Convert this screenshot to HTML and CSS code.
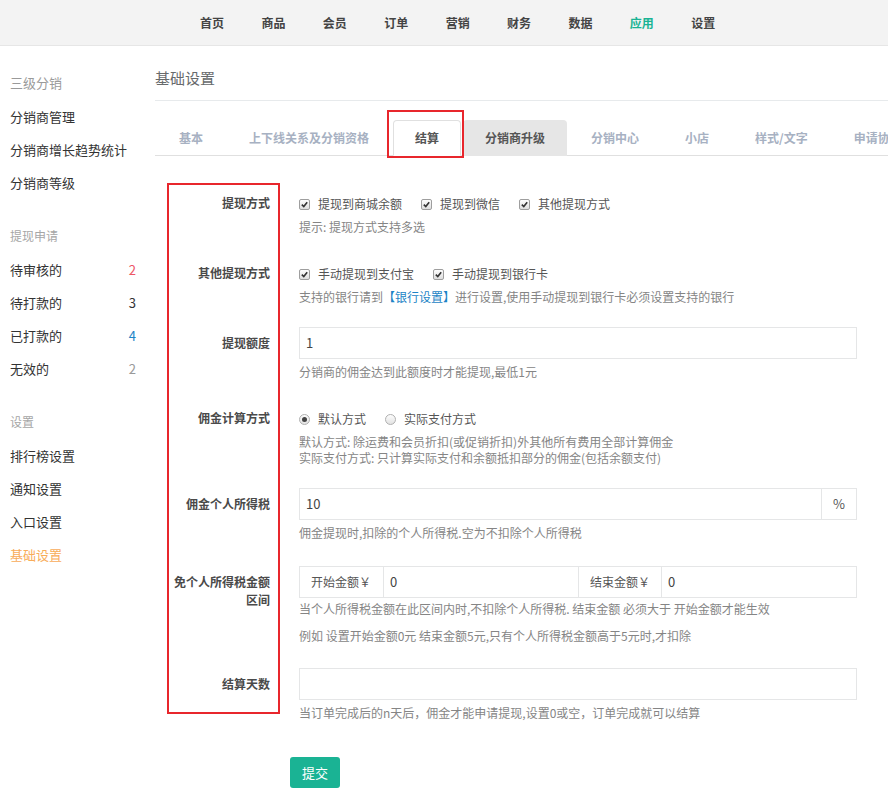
FILE: index.html
```html
<!DOCTYPE html>
<html lang="zh-CN">
<head>
<meta charset="utf-8">
<title>基础设置</title>
<link rel="stylesheet" href="styles.css">
</head>
<body>
<header class="topbar">
  <nav class="topnav">
    <a>首页</a><a>商品</a><a>会员</a><a>订单</a><a>营销</a><a>财务</a><a>数据</a><a class="on">应用</a><a>设置</a>
  </nav>
</header>
<div class="layout">
  <aside class="sidebar">
    <div class="side-group">
      <div class="side-head big">三级分销</div>
      <div class="side-item">分销商管理</div>
      <div class="side-item">分销商增长趋势统计</div>
      <div class="side-item">分销商等级</div>
    </div>
    <div class="side-group">
      <div class="side-head">提现申请</div>
      <div class="side-item"><span>待审核的</span><span class="num red">2</span></div>
      <div class="side-item"><span>待打款的</span><span class="num">3</span></div>
      <div class="side-item"><span>已打款的</span><span class="num blue">4</span></div>
      <div class="side-item"><span>无效的</span><span class="num gray">2</span></div>
    </div>
    <div class="side-group">
      <div class="side-head">设置</div>
      <div class="side-item">排行榜设置</div>
      <div class="side-item">通知设置</div>
      <div class="side-item">入口设置</div>
      <div class="side-item active">基础设置</div>
    </div>
  </aside>
  <main class="main">
    <h1 class="page-title">基础设置</h1>
    <ul class="tabs">
      <li><a>基本</a></li>
      <li><a>上下线关系及分销资格</a></li>
      <li class="active"><a>结算</a></li>
      <li class="hover"><a>分销商升级</a></li>
      <li><a>分销中心</a></li>
      <li><a>小店</a></li>
      <li><a>样式/文字</a></li>
      <li><a>申请协议</a></li>
    </ul>
    <form class="form">
      <div class="row">
        <label class="lbl">提现方式</label>
        <div class="ctl">
          <div class="checks">
            <span class="opt"><span class="cb"><svg viewBox="0 0 10 10"><path d="M2 5.2 L4.2 7.3 L8 2.6" /></svg></span>提现到商城余额</span>
            <span class="opt"><span class="cb"><svg viewBox="0 0 10 10"><path d="M2 5.2 L4.2 7.3 L8 2.6" /></svg></span>提现到微信</span>
            <span class="opt"><span class="cb"><svg viewBox="0 0 10 10"><path d="M2 5.2 L4.2 7.3 L8 2.6" /></svg></span>其他提现方式</span>
          </div>
          <p class="hint">提示: 提现方式支持多选</p>
        </div>
      </div>
      <div class="row">
        <label class="lbl">其他提现方式</label>
        <div class="ctl">
          <div class="checks">
            <span class="opt"><span class="cb"><svg viewBox="0 0 10 10"><path d="M2 5.2 L4.2 7.3 L8 2.6" /></svg></span>手动提现到支付宝</span>
            <span class="opt"><span class="cb"><svg viewBox="0 0 10 10"><path d="M2 5.2 L4.2 7.3 L8 2.6" /></svg></span>手动提现到银行卡</span>
          </div>
          <p class="hint">支持的银行请到<a class="link">【银行设置】</a>进行设置,使用手动提现到银行卡必须设置支持的银行</p>
        </div>
      </div>
      <div class="row">
        <label class="lbl">提现额度</label>
        <div class="ctl">
          <div class="input">1</div>
          <p class="hint">分销商的佣金达到此额度时才能提现,最低1元</p>
        </div>
      </div>
      <div class="row">
        <label class="lbl">佣金计算方式</label>
        <div class="ctl">
          <div class="checks">
            <span class="opt"><span class="rb on"></span>默认方式</span>
            <span class="opt"><span class="rb"></span>实际支付方式</span>
          </div>
          <p class="hint">默认方式: 除运费和会员折扣(或促销折扣)外其他所有费用全部计算佣金<br>实际支付方式: 只计算实际支付和余额抵扣部分的佣金(包括余额支付)</p>
        </div>
      </div>
      <div class="row row-wide">
        <label class="lbl">佣金个人所得税</label>
        <div class="ctl">
          <div class="group">
            <div class="input grow">10</div>
            <div class="addon pct">%</div>
          </div>
          <p class="hint">佣金提现时,扣除的个人所得税.空为不扣除个人所得税</p>
        </div>
      </div>
      <div class="row row-mid">
        <label class="lbl">免个人所得税金额区间</label>
        <div class="ctl">
          <div class="group">
            <div class="addon first">开始金额￥</div>
            <div class="input grow">0</div>
            <div class="addon">结束金额￥</div>
            <div class="input grow">0</div>
          </div>
          <p class="hint tight">当个人所得税金额在此区间内时,不扣除个人所得税. 结束金额 必须大于 开始金额才能生效</p>
          <p class="hint loose">例如 设置开始金额0元 结束金额5元,只有个人所得税金额高于5元时,才扣除</p>
        </div>
      </div>
      <div class="row">
        <label class="lbl">结算天数</label>
        <div class="ctl">
          <div class="input"></div>
          <p class="hint">当订单完成后的n天后，佣金才能申请提现,设置0或空，订单完成就可以结算</p>
        </div>
      </div>
      <div class="actions">
        <button type="button" class="btn">提交</button>
      </div>
    </form>
  </main>
</div>
<div class="mark mark-tab"></div>
<div class="mark mark-form"></div>
</body>
</html>
```

FILE: styles.css
```css
* { box-sizing: border-box; }
html, body { margin: 0; padding: 0; }
body {
  font-family: "Noto Sans CJK SC", "Liberation Sans", sans-serif;
  font-size: 12px;
  color: #333;
  background: #fff;
  width: 888px;
  overflow: hidden;
  position: relative;
}
a { text-decoration: none; }

/* top bar */
.topbar {
  height: 46px;
  background: #f3f3f3;
  border-bottom: 1px solid #e6e6e6;
}
.topnav {
  display: flex;
  gap: 37.4px;
  padding-left: 200px;
  line-height: 45px;
  font-weight: bold;
  font-size: 12px;
}
.topnav a { color: #444; }
.topnav a.on { color: #1ab394; }

.layout { display: flex; align-items: flex-start; }

/* sidebar */
.sidebar { width: 155px; flex: none; padding-top: 20px; }
.side-group { margin-bottom: 20px; }
.side-head {
  height: 33px;
  line-height: 33px;
  padding-left: 10px;
  margin-bottom: 1px;
  color: #a6a6a6;
  font-size: 12px;
}
.side-head.big { font-size: 13px; color: #9a9a9a; }
.side-item {
  height: 33px;
  line-height: 33px;
  padding: 0 19px 0 10px;
  font-size: 13px;
  color: #333;
  display: flex;
  justify-content: space-between;
}
.side-item.active { color: #f8ac59; }
.num { font-size: 13px; color: #333; }
.num.red { color: #ed5565; }
.num.blue { color: #1c84c6; }
.num.gray { color: #999; }

/* main */
.main { flex: 1; min-width: 0; }
.page-title {
  margin: 0;
  padding: 22px 0 12px;
  font-size: 15px;
  line-height: 20px;
  font-weight: normal;
  color: #676a6c;
  border-bottom: 1px solid #e7eaec;
}
.tabs {
  list-style: none;
  margin: 19px 0 0;
  padding: 0 0 0 2px;
  display: flex;
  white-space: nowrap;
  border-bottom: 1px solid #e0e0e0;
}
.tabs li { margin-right: 2px; margin-bottom: -1px; flex: none; }
.tabs a {
  display: block;
  padding: 10px 21px;
  line-height: 14px;
  border: 1px solid transparent;
  border-radius: 4px 4px 0 0;
  font-weight: bold;
  color: #a7b1c2;
}
.tabs li.active a {
  background: #fff;
  color: #555;
  border-color: #e0e0e0 #e0e0e0 #fff;
}
.tabs li.hover a { background: #e6e6e6; color: #555; }

/* form */
.form { padding: 31px 31px 0 0; }
.row {
  display: grid;
  grid-template-columns: 115px 558px;
  column-gap: 29px;
  margin-bottom: 22px;
}
.row-wide { margin-bottom: 25px; }
.row-mid { margin-bottom: 24px; }
.lbl {
  padding: 7px 0 0 10px;
  line-height: 18px;
  text-align: right;
  font-weight: bold;
  color: #4a4a4a;
}
.checks {
  display: flex;
  gap: 19px;
  padding-top: 7px;
  line-height: 20px;
  color: #555;
}
.opt { display: flex; align-items: center; }
.cb {
  width: 11px; height: 11px;
  border: 1px solid #9e9e9e;
  border-radius: 2px;
  background: linear-gradient(#fdfdfd, #dedede);
  margin-right: 8px;
  display: flex;
}
.cb svg { width: 9px; height: 9px; }
.cb path { fill: none; stroke: #333; stroke-width: 1.8; }
.rb {
  width: 11px; height: 11px;
  border: 1px solid #b0b0b0;
  border-radius: 50%;
  background: linear-gradient(#fdfdfd, #e2e2e2);
  margin-right: 8px;
  position: relative;
}
.rb.on::after {
  content: "";
  position: absolute;
  left: 2px; top: 2px;
  width: 5px; height: 5px;
  border-radius: 50%;
  background: #444;
}
.hint {
  margin: 5px 0 0;
  line-height: 16px;
  color: #858585;
  white-space: nowrap;
}
.hint.tight { margin-top: 3px; }
.hint.loose { margin-top: 11px; }
.link { color: #1c84c6; }
.input {
  height: 32px;
  border: 1px solid #e5e6e7;
  padding: 0 6px;
  line-height: 30px;
  font-size: 13px;
  color: #444;
  background: #fff;
}
.group { display: flex; }
.group .grow { flex: 1; min-width: 0; }
.addon {
  height: 32px;
  line-height: 30px;
  border: 1px solid #e5e6e7;
  border-left: none;
  padding: 0 11px;
  font-size: 12px;
  color: #555;
  white-space: nowrap;
}
.group .input + .input, .group .addon + .input { border-left: none; }
.addon.first { border-left: 1px solid #e5e6e7; width: 85px; }
.addon.pct { width: 35px; padding: 0; text-align: center; font-size: 13px; }
.group .addon:not(.first):not(.pct) { width: 83px; }

.actions { padding: 14px 0 0 135px; }
.btn {
  height: 31px;
  width: 50px;
  padding: 0;
  border: none;
  border-radius: 3px;
  background: #1ab394;
  color: #fff;
  font-family: inherit;
  font-size: 13px;
}

/* annotation overlays */
.mark {
  position: absolute;
  border: 2px solid #e8262c;
  pointer-events: none;
}
.mark-tab { left: 387px; top: 110px; width: 77px; height: 48px; }
.mark-form { left: 167px; top: 183px; width: 113px; height: 531px; }
```
